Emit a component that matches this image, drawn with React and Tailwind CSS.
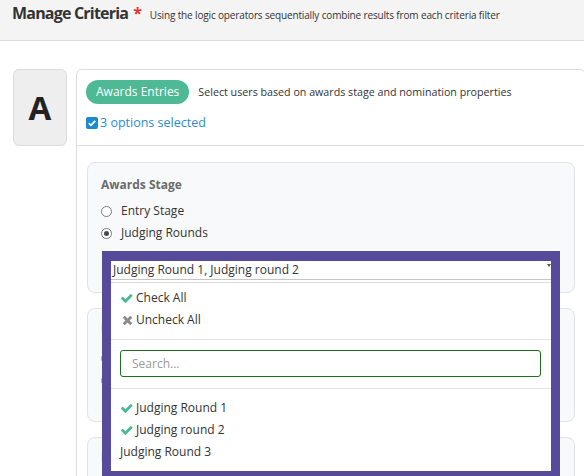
import React from "react";

const CHECK_PATH =
  "M1671 566q0 40-28 68l-724 724-136 136q-28 28-68 28t-68-28l-136-136-362-362q-28-28-28-68t28-68l136-136q28-28 68-28t68 28l294 295 656-657q28-28 68-28t68 28l136 136q28 28 28 68z";
const TIMES_PATH =
  "M1490 1322q0 40-28 68l-136 136q-28 28-68 28t-68-28l-294-294-294 294q-28 28-68 28t-68-28l-136-136q-28-28-28-68t28-68l294-294-294-294q-28-28-28-68t28-68l136-136q28-28 68-28t68 28l294 294 294-294q28-28 68-28t68 28l136 136q28 28 28 68t-28 68l-294 294 294 294q28 28 28 68z";

function CheckIcon({ className }) {
  return (
    <svg viewBox="121 334 1550 1188" className={className} fill="currentColor">
      <path d={CHECK_PATH} />
    </svg>
  );
}

function TimesIcon({ className }) {
  return (
    <svg viewBox="302 366 1188 1188" className={className} fill="currentColor">
      <path d={TIMES_PATH} />
    </svg>
  );
}

function Radio({ checked, label }) {
  return (
    <label className="flex h-[22px] items-center gap-[9px] text-[12px] text-[#333]">
      <span className="flex h-[11px] w-[11px] shrink-0 items-center justify-center rounded-full border border-[#7a7a7a] bg-white">
        {checked && <span className="h-[5px] w-[5px] rounded-full bg-[#4a4a4a]" />}
      </span>
      {label}
    </label>
  );
}

function OptionRow({ checked, label }) {
  return (
    <div className="flex h-[22px] items-center text-[12px] text-[#333]">
      {checked ? (
        <span className="ml-[10px] mr-[3px] flex w-[12px] justify-start">
          <CheckIcon className="h-[9px] w-[11.5px] text-[#4cb995]" />
        </span>
      ) : (
        <span className="ml-[9px]" />
      )}
      {label}
    </div>
  );
}

/* collapsed filter card placeholder: a title bar and two option stubs */
function FilterStub() {
  return (
    <div className="mt-[15px] h-[114px] rounded-[8px] border border-[#e1e3e7] bg-[#f8f9fb] px-[13px] pt-[14px]">
      <div className="h-[10px] w-[90px] rounded-[2px] bg-[#e6e7ea]" />
      <div className="mt-[20px] h-[11px] w-[11px] rounded-full border border-[#9a9a9a] bg-white" />
      <div className="mt-[11px] h-[11px] w-[11px] rounded-full border border-[#9a9a9a] bg-white" />
    </div>
  );
}

export default function App() {
  return (
    <div className="h-[476px] w-[584px] overflow-hidden bg-white font-['Open_Sans',sans-serif] text-[#333]">
      {/* page header */}
      <header className="flex h-[41px] items-baseline border-b border-[#dddddd] bg-[#f4f4f4] pl-[12px] pt-[3px]">
        <h1 className="text-[16px] leading-[20px] font-bold tracking-[-0.05em] text-[#333]">
          Manage Criteria
        </h1>
        <span className="ml-[5px] text-[16px] leading-[20px] font-bold text-[#e3342f]">*</span>
        <p className="ml-[8px] text-[10px] tracking-[-0.015em] text-[#333]">
          Using the logic operators sequentially combine results from each criteria filter
        </p>
      </header>

      <div className="flex gap-[9px] pl-[13px] pt-[28px]">
        {/* criteria letter */}
        <div className="flex h-[77px] w-[54px] shrink-0 items-center justify-center rounded-[6px] border border-[#dcdcdc] bg-[#eeeeee] text-[33px] font-bold text-[#222]">
          A
        </div>

        {/* criteria card */}
        <div className="h-[420px] w-[510px] shrink-0 rounded-t-[6px] border border-[#dddddd] bg-white">
          <div className="border-b border-[#dddddd] px-[9px] pb-[13px] pt-[10px]">
            <div className="flex items-center">
              <span className="flex h-[24px] items-center rounded-full bg-[#4db995] px-[10px] text-[12px] text-white">
                Awards Entries
              </span>
              <span className="ml-[9px] text-[10.7px] text-[#333]">
                Select users based on awards stage and nomination properties
              </span>
            </div>
            <div className="mt-[10px] flex h-[18px] items-center gap-[2px]">
              <svg viewBox="0 0 12 12" className="h-[12px] w-[12px]">
                <rect x="0" y="0" width="12" height="12" rx="2" fill="#1b8ad0" />
                <path d="M2.8 6.2 L5 8.3 L9.2 3.8" stroke="#fff" strokeWidth="1.8" fill="none" />
              </svg>
              <span className="text-[12.5px] text-[#2a8ccd]">3 options selected</span>
            </div>
          </div>

          <div className="px-[10px] pt-[16px]">
            {/* awards stage filter */}
            <div className="rounded-[8px] border border-[#e1e3e7] bg-[#f8f9fb] px-[13px] pb-[12px] pt-[14px]">
              <div className="text-[12px] leading-[16px] font-bold text-[#6b6b6b]">Awards Stage</div>
              <div className="mt-[7px]">
                <Radio label="Entry Stage" />
                <Radio checked label="Judging Rounds" />
              </div>

              <div className="relative mt-[7px] h-[29px]">
                <div className="absolute left-[1px] right-[1px] top-0 z-10 border-x-[9px] border-b-[9px] border-t-[10px] border-[#574a9a] bg-white">
                  {/* selected value */}
                  <div className="flex h-[19px] items-start justify-between border-b border-[#c6c6c6] pl-[2px]">
                    <span className="text-[12px] leading-[18px] text-[#333]">
                      Judging Round 1, Judging round 2
                    </span>
                    <span className="mt-[3px] h-0 w-0 border-x-[2.5px] border-t-[3px] border-x-transparent border-t-[#555]" />
                  </div>

                  <div className="mt-[2px] border-t border-[#dddddd]">
                    <div className="border-b border-[#e5e5e5] pb-[8px] pt-[4px]">
                      <div className="flex h-[22px] items-center text-[12px] text-[#333]">
                        <span className="ml-[10px] mr-[3px] flex w-[12px]">
                          <CheckIcon className="h-[9px] w-[11.5px] text-[#4cb995]" />
                        </span>
                        Check All
                      </div>
                      <div className="flex h-[22px] items-center text-[12px] text-[#333]">
                        <span className="ml-[10px] mr-[3px] flex w-[12px] justify-center">
                          <TimesIcon className="h-[9px] w-[9px] text-[#8a8a8a]" />
                        </span>
                        Uncheck All
                      </div>
                    </div>

                    <div className="border-b border-[#e5e5e5] pb-[11px] pl-[9px] pr-[10px] pt-[10px]">
                      <input
                        type="text"
                        placeholder="Search..."
                        className="block h-[27px] w-full rounded-[3px] border border-[#1e6f1e] bg-white pl-[11px] text-[12px] text-[#333] outline-none placeholder:text-[#9a9a9a]"
                      />
                    </div>

                    <div className="pb-[8px] pt-[8px]">
                      <OptionRow checked label="Judging Round 1" />
                      <OptionRow checked label="Judging round 2" />
                      <OptionRow label="Judging Round 3" />
                    </div>
                  </div>
                </div>
              </div>
            </div>

            <FilterStub />
            <FilterStub />
          </div>
        </div>
      </div>
    </div>
  );
}
